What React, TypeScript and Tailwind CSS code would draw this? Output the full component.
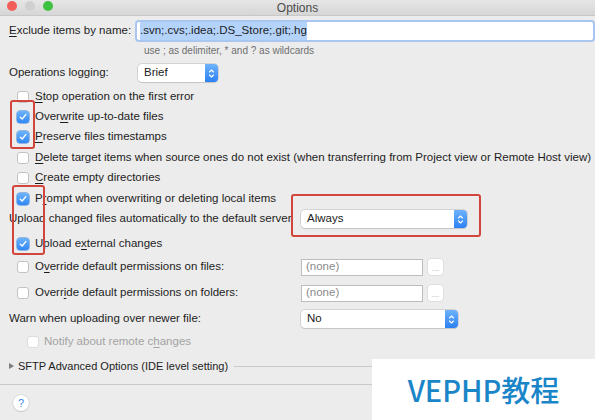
import type { ReactNode } from "react";

const font = { fontFamily: '"Liberation Sans", Arial, sans-serif' };

function U({ children }: { children: ReactNode }) {
  return <span className="underline underline-offset-[2px]">{children}</span>;
}

function Check({ on = false, dim = false }: { on?: boolean; dim?: boolean }) {
  if (on)
    return (
      <span className="flex h-[12px] w-[12px] shrink-0 items-center justify-center rounded-[3px] bg-gradient-to-b from-[#6cb3fa] to-[#2f87f5] shadow-[0_0_0_0.5px_#3a7fd8]">
        <svg width="8" height="8" viewBox="0 0 8 8">
          <path d="M1.3 4.2 L3.2 6 L6.8 1.6" fill="none" stroke="white" strokeWidth="1.4" strokeLinecap="round" strokeLinejoin="round" />
        </svg>
      </span>
    );
  return (
    <span
      className={`h-[12px] w-[12px] shrink-0 rounded-[3px] border bg-white ${
        dim ? "border-[#dcdcdc]" : "border-[#c3c3c3]"
      }`}
    />
  );
}

function Stepper() {
  return (
    <span className="flex h-full w-[13px] items-center justify-center rounded-r-[4px] bg-gradient-to-b from-[#6db2fa] to-[#2a80f3]">
      <svg width="7" height="11" viewBox="0 0 7 11">
        <path d="M1.5 4 L3.5 2 L5.5 4 M1.5 7 L3.5 9 L5.5 7" fill="none" stroke="white" strokeWidth="1.1" strokeLinecap="round" strokeLinejoin="round" />
      </svg>
    </span>
  );
}

function Select({ value, w }: { value: string; w: string }) {
  return (
    <span className={`flex h-[18px] ${w} items-center rounded-[4px] bg-white shadow-[0_0_0_0.5px_#b9b9b9,0_1px_1px_rgba(0,0,0,0.12)]`}>
      <span className="flex-1 pl-[6px] text-[11.5px] text-[#222]">{value}</span>
      <Stepper />
    </span>
  );
}

function NoneField() {
  return (
    <span className="flex items-center gap-[5px]">
      <span className="flex h-[17px] w-[122px] items-center border border-[#bdbdbd] bg-white pl-[4px] text-[11.5px] text-[#8a8a8a]">
        (none)
      </span>
      <span className="flex h-[16px] w-[15px] items-end justify-center rounded-[3px] bg-white pb-[2px] text-[9px] leading-none text-[#b5b5b5] shadow-[0_0_0_0.5px_#d2d2d2]">
        ...
      </span>
    </span>
  );
}

function CheckRow({ on, children, cls }: { on?: boolean; children: ReactNode; cls: string }) {
  return (
    <div className={`flex h-[20px] items-center gap-[6px] pl-[17px] ${cls}`}>
      <Check on={on} />
      <span className="whitespace-nowrap">{children}</span>
    </div>
  );
}

export default function App() {
  return (
    <div className="relative h-[420px] w-[595px] overflow-hidden bg-[#ececec] text-[11.5px] text-[#1d1d1d]" style={font}>
      {/* title bar */}
      <div className="relative flex h-[16px] items-center justify-center border-b border-[#c8c8c8] bg-gradient-to-b from-[#e6e6e6] to-[#d6d6d6]">
        <div className="absolute left-[7px] top-[1px] flex gap-[8px]">
          <span className="h-[10px] w-[10px] rounded-full bg-[#f25f58]" />
          <span className="h-[10px] w-[10px] rounded-full bg-[#d0d0d0]" />
          <span className="h-[10px] w-[10px] rounded-full bg-[#3ec140]" />
        </div>
        <span className="text-[12px] text-[#4a4a4a]">Options</span>
      </div>

      <div className="flex flex-col">
        <div className="mt-[6px] flex h-[18px] items-center pl-[9px]">
          <span className="w-[128px]">
            <U>E</U>xclude items by name:
          </span>
          <span className="flex h-[18px] w-[456px] items-center rounded-[2px] bg-white pl-[3px] shadow-[0_0_0_2px_#a8c6ef]">
            <span className="bg-[#b4d3fb]">.svn;.cvs;.idea;.DS_Store;.git;.hg</span>
          </span>
        </div>
        <div className="mt-[1px] flex h-[18px] items-center pl-[144px] text-[10px] text-[#6f6f6f]">
          use ; as delimiter, * and ? as wildcards
        </div>
        <div className="mt-[5px] flex h-[18px] items-center pl-[9px]">
          <span className="w-[129px]">Operations logging:</span>
          <Select value="Brief" w="w-[80px]" />
        </div>

        <CheckRow cls="mt-[5px]">
          <U>S</U>top operation on the first error
        </CheckRow>
        <CheckRow on cls="">
          Over<U>w</U>rite up-to-date files
        </CheckRow>
        <CheckRow on cls="">
          <U>P</U>reserve files timestamps
        </CheckRow>
        <CheckRow cls="mt-[1px]">
          <U>D</U>elete target items when source ones do not exist (when transferring from Project view or Remote Host view)
        </CheckRow>
        <CheckRow cls="">
          <U>C</U>reate empty directories
        </CheckRow>
        <CheckRow on cls="mt-[1px]">
          P<U>r</U>ompt when overwriting or deleting local items
        </CheckRow>
        <div className="flex h-[20px] items-center pl-[9px]">
          <span className="w-[292px] whitespace-nowrap">Upload changed files automatically to the default server</span>
          <Select value="Always" w="w-[166px]" />
        </div>
        <CheckRow on cls="mt-[5px]">
          Upload e<U>x</U>ternal changes
        </CheckRow>
        <div className="mt-[3px] flex h-[20px] items-center pl-[17px]">
          <Check />
          <span className="ml-[6px] w-[266px]">
            O<U>v</U>erride default permissions on files:
          </span>
          <NoneField />
        </div>
        <div className="mt-[6px] flex h-[20px] items-center pl-[17px]">
          <Check />
          <span className="ml-[6px] w-[266px]">
            Overr<U>i</U>de default permissions on folders:
          </span>
          <NoneField />
        </div>
        <div className="mt-[6px] flex h-[20px] items-center pl-[9px]">
          <span className="w-[292px]">Warn when uploading over newer file:</span>
          <Select value="No" w="w-[157px]" />
        </div>
        <div className="mt-[3px] flex h-[20px] items-center gap-[5px] pl-[27px] text-[#a3a3a3]">
          <Check dim />
          <span>
            Notify about remote c<U>h</U>anges
          </span>
        </div>
        <div className="mt-[4px] flex h-[20px] items-center pl-[9px]">
          <svg width="5" height="6" viewBox="0 0 5 6" className="mr-[4px]">
            <path d="M0 0 L5 3 L0 6 Z" fill="#7d7d7d" />
          </svg>
          <span className="whitespace-nowrap text-[11px]">SFTP Advanced Options (IDE level setting)</span>
          <span className="ml-[6px] h-px flex-1 bg-[#c9c9c9]" />
        </div>
        <div className="mt-[8px] h-px bg-[#c9c9c9]" />
        <div className="flex h-[36px] items-center pl-[13px]">
          <span className="flex h-[16px] w-[16px] items-center justify-center rounded-full bg-white text-[11px] text-[#3b8ff0] shadow-[0_0_0_0.5px_#c5c5c5,0_1px_1px_rgba(0,0,0,0.15)]">
            ?
          </span>
        </div>
      </div>

      {/* red annotation boxes */}
      <div className="absolute left-[10px] top-[100px] h-[49px] w-[25px] rounded-[3px] border-2 border-[#d2453b]" />
      <div className="absolute left-[12px] top-[185px] h-[70px] w-[33px] rounded-[3px] border-2 border-[#d2453b]" />
      <div className="absolute left-[291px] top-[194px] h-[43px] w-[190px] rounded-[3px] border-2 border-[#d2453b]" />

      {/* watermark */}
      <div className="absolute left-[372px] top-[359px] flex h-[61px] w-[223px] items-center justify-center bg-white">
        <span
          className="text-[29px] font-medium text-[#1a86c8]"
          style={{ fontFamily: '"Noto Sans CJK SC", "Noto Sans", sans-serif' }}
        >
          VEPHP教程
        </span>
      </div>
    </div>
  );
}
